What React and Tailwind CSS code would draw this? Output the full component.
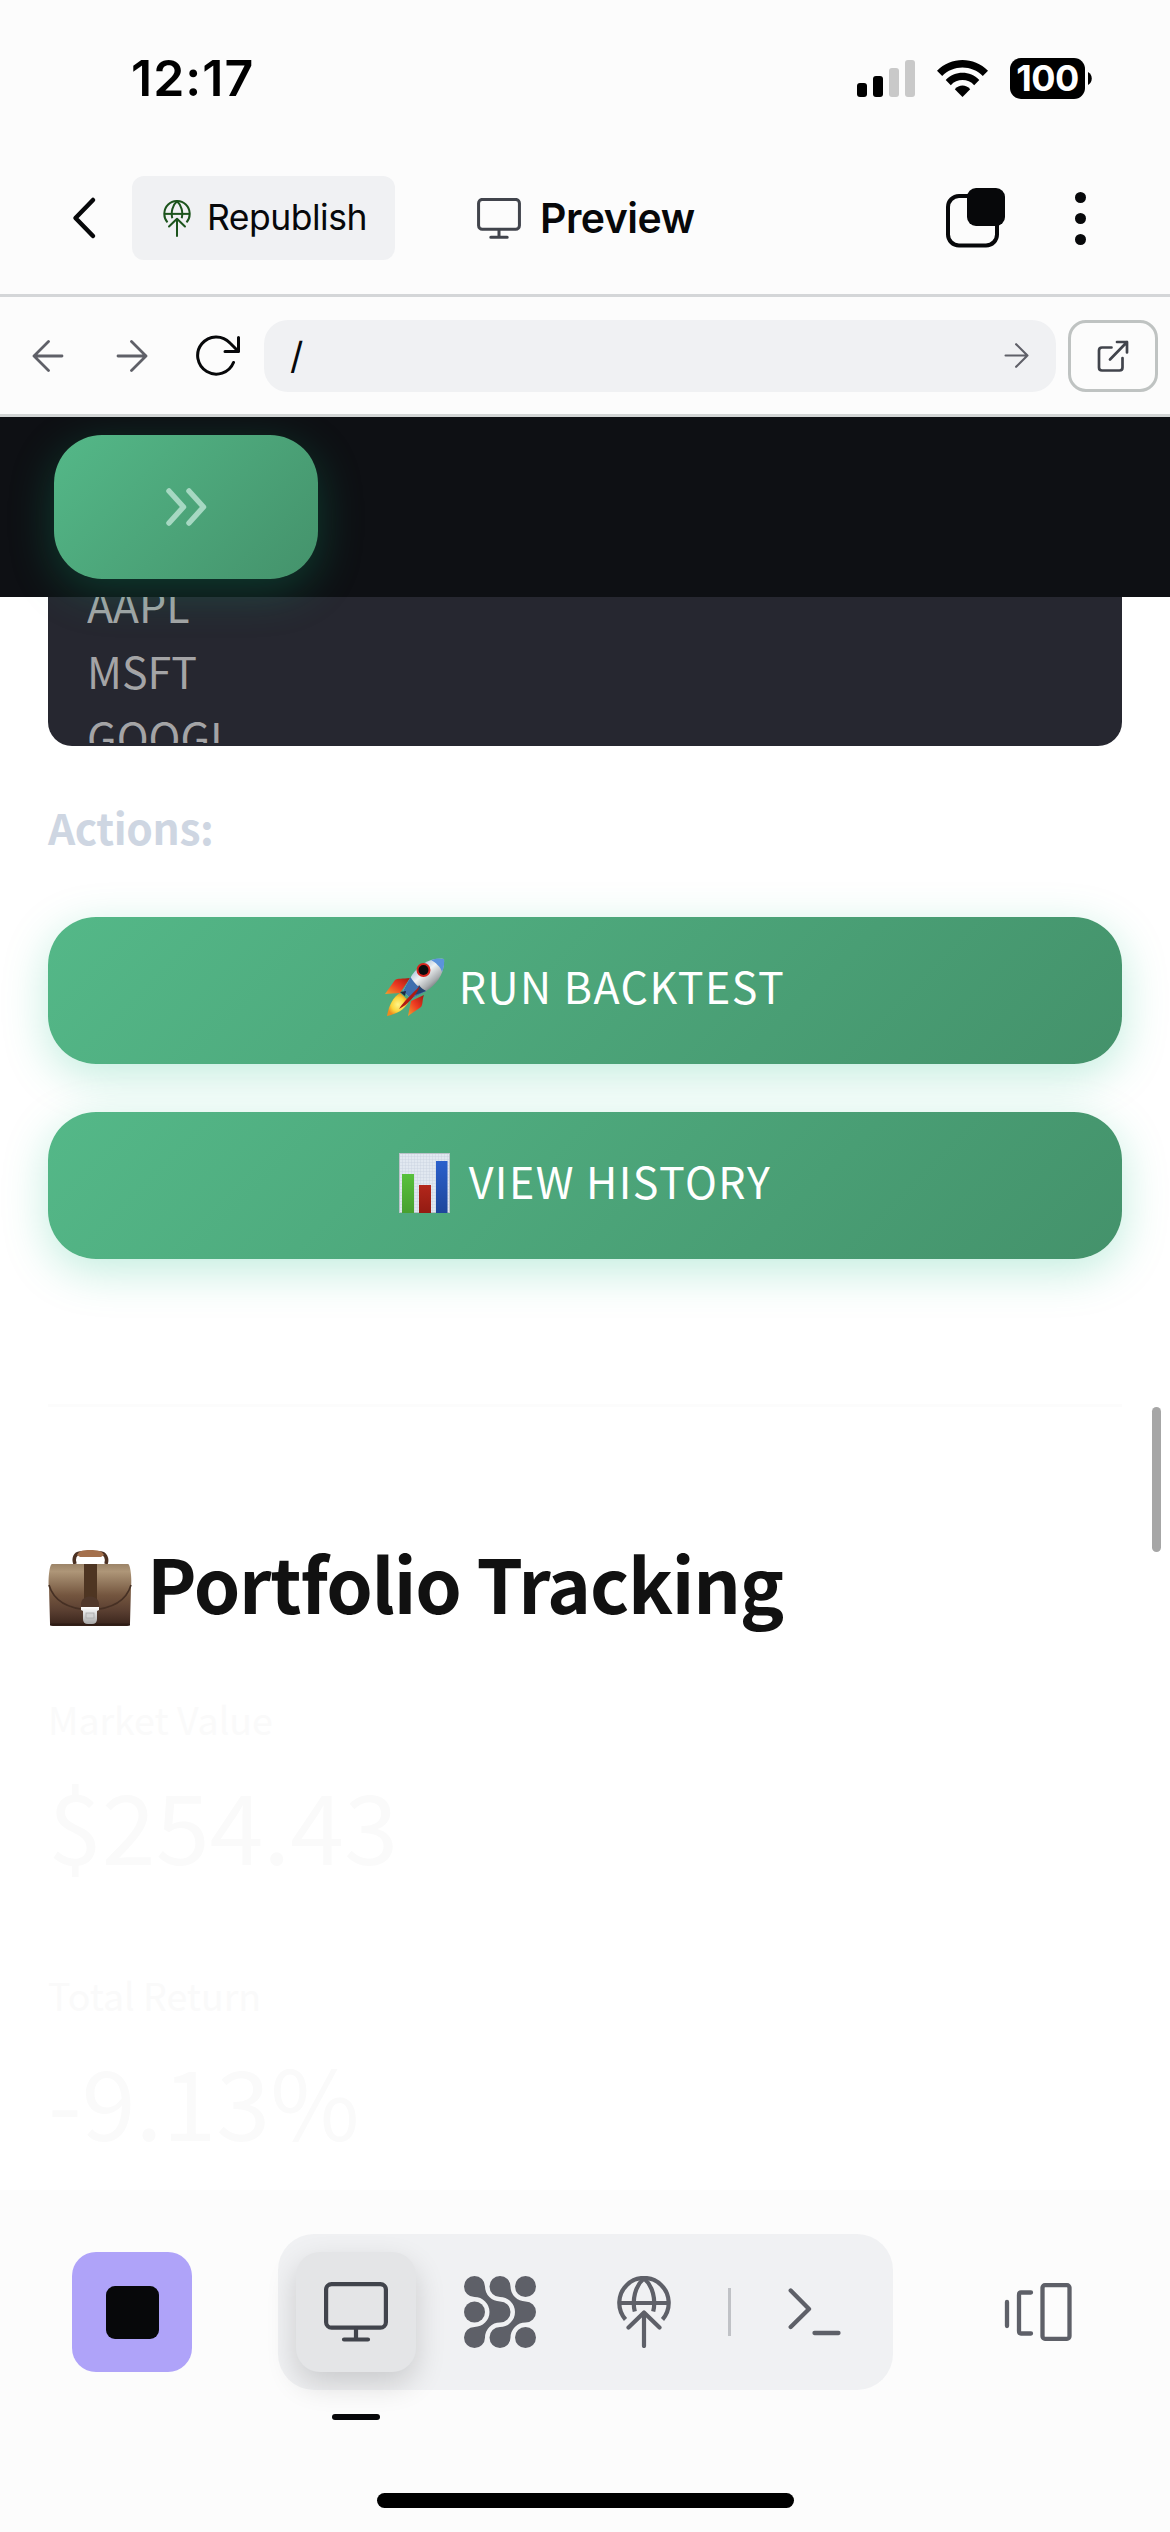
import React from "react";

const SANS = "font-['Noto_Sans_CJK_SC','Open_Sans',sans-serif]";
const UI = "font-['Inter','Roboto',sans-serif]";

function Globe({ className, color, sw = 4.2 }) {
  return (
    <svg className={className} viewBox="0 0 54 72" fill="none" stroke={color} strokeWidth={sw}>
      <path d="M8.5 43.5A24.7 25 0 1 1 45.5 43.5" />
      <path d="M2.5 27H51.5" />
      <path d="M17.8 35.5C15 24 18 10 27 2.5C36 10 39 24 36.2 35.5" />
      <path d="M27 70V38M11.5 51.5L27 36.5L42.5 51.5" strokeLinecap="round" strokeLinejoin="round" />
    </svg>
  );
}

function Monitor({ className, sw = 4.2 }) {
  return (
    <svg className={className} viewBox="0 0 64 60" fill="none" stroke="#41444c" strokeWidth={sw} strokeLinecap="round">
      <rect x="2.1" y="2.1" width="59.8" height="43.6" rx="5.5" />
      <path d="M32 46V57M20 57.5H44" />
    </svg>
  );
}

function Rocket() {
  return (
    <svg className="h-[60px] w-[60px] shrink-0" viewBox="0 0 60 60">
      <defs>
        <linearGradient id="hull" x1="0.2" y1="0.1" x2="0.8" y2="0.8">
          <stop offset="0" stopColor="#7fa3cf" />
          <stop offset="0.45" stopColor="#eef1f2" />
          <stop offset="0.75" stopColor="#a9adb0" />
          <stop offset="1" stopColor="#4e5459" />
        </linearGradient>
        <linearGradient id="fin" x1="1" y1="0" x2="0" y2="1">
          <stop offset="0" stopColor="#a3180f" />
          <stop offset="0.5" stopColor="#ee3a22" />
          <stop offset="1" stopColor="#f2a02c" />
        </linearGradient>
        <radialGradient id="flame">
          <stop offset="0" stopColor="#fff58a" />
          <stop offset="0.6" stopColor="#fbd63d" />
          <stop offset="1" stopColor="#ef8a1e" />
        </radialGradient>
      </defs>
      <path d="M25 20C18 21 12 20 10 22L0 36L15 35Z" fill="url(#fin)" />
      <path d="M39 37C37 42 38 47 36 49L23 58L26 43Z" fill="url(#fin)" />
      <path d="M15 35C8 39 4 47 2 58C11 56 20 52 24 43Z" fill="url(#flame)" />
      <path d="M59 1C45 -1 34 7 27 17L18 33L26 41L41 33C51 27 60 16 59 1Z" fill="url(#hull)" />
      <path d="M25.500 19L18 33L26 41L41 33C34 30 29 25 25.500 19Z" fill="#3f6fae" />
      <path d="M30 37L41 33C38 31 36 30 34 27Z" fill="#23436f" />
      <path d="M59 1C54 0 50 0.500 46 2C50 4 56 9 57 14C59 10 59.500 5 59 1Z" fill="#5b93dc" />
      <circle cx="38.500" cy="12" r="7" fill="#d5231c" />
      <circle cx="38.500" cy="12" r="5" fill="#0a0a0c" />
      <path d="M35 28C27 36 19 43 14 51C22 47 31 38 35 28Z" fill="#b01a14" />
      <path d="M15 34L21 33L20 38Z" fill="#1c2a45" />
    </svg>
  );
}

function BarChart() {
  return (
    <svg className="mr-[5px] h-[60px] w-[51px] shrink-0" viewBox="0 0 51 60">
      <defs>
        <pattern id="grid" width="3" height="3" patternUnits="userSpaceOnUse">
          <rect width="3" height="3" fill="#e1e8f0" />
          <path d="M0 0H3M0 0V3" stroke="#c4cfdb" strokeWidth="0.7" />
        </pattern>
        <linearGradient id="g1" x2="0" y2="1"><stop stopColor="#58c13c" /><stop offset="1" stopColor="#48a030" /></linearGradient>
        <linearGradient id="g2" x2="0" y2="1"><stop stopColor="#b3271b" /><stop offset="1" stopColor="#931b12" /></linearGradient>
        <linearGradient id="g3" x2="0" y2="1"><stop stopColor="#2b60cc" /><stop offset="1" stopColor="#1e469b" /></linearGradient>
      </defs>
      <rect width="51" height="60" fill="url(#grid)" />
      <rect x="0.5" y="0.5" width="50" height="59" fill="none" stroke="#b9c2c9" />
      <rect x="3" y="21" width="12" height="39" fill="url(#g1)" />
      <rect x="20" y="32" width="12" height="28" fill="url(#g2)" />
      <rect x="37" y="8" width="11.500" height="52" fill="url(#g3)" />
    </svg>
  );
}

function Briefcase() {
  return (
    <svg className="h-[76px] w-[84px] shrink-0" viewBox="0 0 84 76">
      <defs>
        <linearGradient id="case" x2="0" y2="1">
          <stop offset="0" stopColor="#9c8468" />
          <stop offset="0.12" stopColor="#ae9678" />
          <stop offset="0.5" stopColor="#74563f" />
          <stop offset="0.75" stopColor="#5a3f31" />
          <stop offset="1" stopColor="#38231b" />
        </linearGradient>
        <linearGradient id="lock" x2="0" y2="1">
          <stop stopColor="#ffffff" />
          <stop offset="1" stopColor="#a8a8a8" />
        </linearGradient>
      </defs>
      <path d="M27 14C25 8 27 3.500 32 3H53C57 3.500 60 8 58 14" fill="none" stroke="#4b3123" strokeWidth="3.500" />
      <path d="M29 5C31 1 34 0 42 0S54 1 56 5L53 7H32Z" fill="#a4704c" />
      <path d="M4 14H80C83 15 84 32 83 38L82 73Q82 76 79 76H5Q2 76 2 73L1 38C0 32 1 15 4 14Z" fill="url(#case)" />
      <path d="M1 35C6 52 22 59 42 60C62 59 78 52 83 35" fill="none" stroke="#463024" strokeWidth="1.600" />
      <path d="M2 74.500H82" stroke="#2e1c15" strokeWidth="2" />
      <rect x="36" y="14" width="13" height="36" fill="#4e3522" />
      <path d="M33 57V54C33 44 51 44 51 54V57Z" fill="#50382b" />
      <path d="M33 57H51V60L49 61V69Q49 74 44 74H40Q35 74 35 69V61L33 60Z" fill="url(#lock)" />
      <rect x="38" y="63" width="8" height="5" fill="#d2d2d2" stroke="#aaa" strokeWidth="0.800" />
    </svg>
  );
}

function StatusBar() {
  return (
    <div className={`flex h-[156px] items-center justify-between pl-[131px] pr-[78px] ${UI}`}>
      <span className="text-[50px] font-semibold leading-none tracking-[1px] text-black">12:17</span>
      <div className="flex items-center">
        <div className="flex h-[37px] items-end gap-[6px]">
          <i className="h-[14px] w-[10px] rounded-[3px] bg-black" />
          <i className="h-[21px] w-[10px] rounded-[3px] bg-black" />
          <i className="h-[29px] w-[10px] rounded-[3px] bg-[#c9c9c9]" />
          <i className="h-[37px] w-[10px] rounded-[3px] bg-[#c9c9c9]" />
        </div>
        <svg className="ml-[22px] h-[37px] w-[51px]" viewBox="0 0 51 37">
          <path d="M0 10.800C14 -3.600 37 -3.600 51 10.800L45.800 16C35 4.600 16 4.600 5.200 16Z" />
          <path d="M8.700 20C18 10.300 33 10.300 42.300 20L37.200 25.200C31 18.400 20 18.400 13.800 25.200Z" />
          <path d="M17.800 29.200C22 24.300 29 24.300 33.200 29.200L25.500 37Z" />
        </svg>
        <span className="ml-[22px] flex h-[41px] w-[75px] items-center justify-center rounded-[11px] bg-black text-[36px] font-bold leading-none tracking-[-0.500px] text-white">
          100
        </span>
        <svg className="ml-[3px] h-[13px] w-[4px]" viewBox="0 0 4 13"><path d="M0 0C5 2.500 5 10.500 0 13Z" /></svg>
      </div>
    </div>
  );
}

function TitleBar() {
  return (
    <div className={`flex h-[141px] items-start border-b-[3px] border-[#d4d6d8] pl-[71px] pt-[20px] ${UI}`}>
      <div className="flex h-[84px] items-center">
        <svg className="h-[44px] w-[26px]" viewBox="0 0 26 44" fill="none" stroke="#07080a" strokeWidth="4.500" strokeLinecap="round" strokeLinejoin="round">
          <path d="M22 4L4.500 22L22 40" />
        </svg>
        <div className="ml-[35px] flex h-[84px] w-[263px] items-center rounded-[12px] bg-[#f0f1f3] pl-[31px]">
          <Globe className="h-[37px] w-[28px]" color="#1c541c" sw={3.9} />
          <span className="ml-[16px] text-[35.500px] leading-none tracking-[-0.500px] text-[#07080a]">Republish</span>
        </div>
        <Monitor className="ml-[82px] h-[41px] w-[44px]" sw={4.4} />
        <span className="ml-[19px] w-[159px] text-[41px] font-semibold leading-none tracking-[-0.500px] text-[#07080a]">Preview</span>
        <svg className="ml-[247px] h-[60px] w-[60px]" viewBox="0 0 60 60">
          <rect x="2" y="8" width="49" height="49.500" rx="11" fill="none" stroke="#07080a" strokeWidth="4" />
          <rect x="21" y="0" width="38" height="38" rx="9" fill="#07080a" />
        </svg>
        <div className="ml-[69px] flex flex-col gap-[10px]">
          <i className="h-[11px] w-[11px] rounded-full bg-[#07080a]" />
          <i className="h-[11px] w-[11px] rounded-full bg-[#07080a]" />
          <i className="h-[11px] w-[11px] rounded-full bg-[#07080a]" />
        </div>
      </div>
    </div>
  );
}

function Arrow({ className, color = "#5f6068", flip = false }) {
  return (
    <svg className={className} viewBox="0 0 32 32" fill="none" stroke={color} strokeWidth="2.800" strokeLinecap="round" strokeLinejoin="round">
      {flip ? <path d="M30 16H2M16.500 1.500L2 16L16.500 30.500" /> : <path d="M2 16H30M15.500 1.500L30 16L15.500 30.500" />}
    </svg>
  );
}

function AddressBar() {
  return (
    <div className={`flex h-[120px] items-center border-b-[3px] border-[#d2d5d5] pl-[32px] ${UI}`}>
      <Arrow className="h-[32px] w-[32px]" flip />
      <Arrow className="ml-[52px] h-[32px] w-[32px]" />
      <svg className="ml-[47px] h-[46px] w-[46px]" viewBox="0 0 46 46" fill="none" stroke="#07080a" strokeWidth="3" strokeLinecap="round" strokeLinejoin="round">
        <path d="M38.500 29.500A18.600 18.600 0 1 1 35 10L43.500 18.500M43.500 4.500V18.500H30" />
      </svg>
      <div className="ml-[23px] flex h-[72px] w-[792px] items-center justify-between rounded-[24px] bg-[#f0f1f3] pl-[26px] pr-[27px]">
        <span className="text-[37px] leading-none text-[#07080a]">/</span>
        <Arrow className="h-[25px] w-[25px]" />
      </div>
      <div className="ml-[12px] flex h-[72px] w-[90px] items-center justify-center rounded-[18px] border-[3px] border-[#bfc3c2]">
        <svg className="h-[32px] w-[32px]" viewBox="0 0 32 32" fill="none" stroke="#41444c" strokeWidth="2.700" strokeLinecap="round" strokeLinejoin="round">
          <path d="M14.500 7.500H5Q2 7.500 2 10.500V27.500Q2 30.500 5 30.500H22.500Q25.500 30.500 25.500 27.500V18" />
          <path d="M13 19.500L30 2M20 2H30V12.500" />
        </svg>
      </div>
    </div>
  );
}

function ActionButton({ icon, label }) {
  return (
    <button className="flex h-[147px] w-full items-center justify-center rounded-[48px] bg-[linear-gradient(135deg,#54b888_0%,#44926b_100%)] pb-[5px] shadow-[0_12px_45px_rgba(16,185,129,0.26)]">
      {icon}
      <span className="ml-[14px] pb-[6px] text-[43px] leading-[66px] tracking-[1.450px] text-white">{label}</span>
    </button>
  );
}

function Metric({ label, value }) {
  return (
    <div className="flex flex-col text-[#fafafa]">
      <span className="text-[37.500px] leading-[60px]">{label}</span>
      <span className="mb-[3px] mt-[-1px] text-[97px] leading-[150px]">{value}</span>
    </div>
  );
}

function BottomBar() {
  return (
    <div className="h-[342px] bg-[#fcfcfc] pt-[44px]">
      <div className="flex h-[156px] items-center pl-[72px]">
        <div className="flex h-[120px] w-[120px] items-center justify-center rounded-[24px] bg-[#afa3f9]">
          <i className="h-[53px] w-[53px] rounded-[9px] bg-[#07080a]" />
        </div>
        <div className="ml-[86px] flex h-[156px] w-[615px] items-center rounded-[36px] bg-[#f0f1f3] pl-[18px]">
          <div className="relative flex h-[120px] w-[120px] items-center justify-center rounded-[24px] bg-[#e4e5e7] shadow-[0_12px_30px_rgba(0,0,0,0.16)]">
            <Monitor className="h-[60px] w-[64px]" />
            <i className="absolute left-[36px] top-[162px] h-[6px] w-[48px] rounded-[3px] bg-[#07080a]" />
          </div>
          <svg className="ml-[48px] h-[72px] w-[72px]" viewBox="0 0 72 72" fill="#5e6068">
            <path d="M10.500 0A10.500 10.500 0 0 1 21 10.500A15 15 0 0 0 36 25.500A10.500 10.500 0 0 1 36 46.500A15 15 0 0 0 21 61.500A10.500 10.500 0 0 1 10.500 72A10.500 10.500 0 0 1 10.500 51A15 15 0 0 0 10.500 21A10.500 10.500 0 0 1 10.500 0Z" />
            <path transform="translate(25.500 0)" d="M10.500 0A10.500 10.500 0 0 1 21 10.500A15 15 0 0 0 36 25.500A10.500 10.500 0 0 1 36 46.500A15 15 0 0 0 21 61.500A10.500 10.500 0 0 1 10.500 72A10.500 10.500 0 0 1 10.500 51A15 15 0 0 0 10.500 21A10.500 10.500 0 0 1 10.500 0Z" />
            <circle cx="61.500" cy="10.500" r="10.500" />
            <circle cx="10.500" cy="36" r="10.500" />
            <circle cx="61.500" cy="61.500" r="10.500" />
          </svg>
          <Globe className="ml-[81px] h-[72px] w-[54px]" color="#5e6068" />
          <i className="ml-[57px] h-[48px] w-[3px] bg-[#c0c2c6]" />
          <svg className="ml-[57px] h-[48px] w-[54px]" viewBox="0 0 54 48" fill="none" stroke="#5e6068" strokeWidth="4.300" strokeLinecap="round" strokeLinejoin="round">
            <path d="M2.700 2.500L21 21L2.700 39M26.500 45H50.500" />
          </svg>
        </div>
        <svg className="ml-[110px] h-[58px] w-[70px]" viewBox="0 0 70 58" fill="none" stroke="#5e6068" strokeWidth="4.300" strokeLinecap="round">
          <path d="M4 19V43M28 9.500H18Q16 9.500 16 12V48Q16 50.500 18 50.500H28" />
          <rect x="39.500" y="2.200" width="27" height="53.600" rx="2.500" />
        </svg>
      </div>
      <div className="mx-auto mt-[103px] h-[15px] w-[417px] rounded-full bg-black" />
    </div>
  );
}

export default function App() {
  return (
    <div className="flex h-[2532px] w-[1170px] flex-col overflow-hidden bg-[#fcfcfc]">
      <StatusBar />
      <TitleBar />
      <AddressBar />
      <div className={`relative h-[1773px] overflow-hidden bg-white ${SANS}`}>
        <header className="relative z-10 flex h-[180px] items-center bg-[#0e1014] pl-[54px]">
          <div className="flex h-[144px] w-[264px] items-center justify-center rounded-[48px] bg-[linear-gradient(135deg,#54b888_0%,#44926b_100%)] shadow-[0_12px_45px_rgba(16,185,129,0.26)]">
            <svg className="h-[40px] w-[42px]" viewBox="0 0 42 40" fill="none" stroke="#a6d8c2" strokeWidth="5.500" strokeLinecap="round" strokeLinejoin="round">
              <path d="M4 4L18.500 20L4 36M24 4L38.500 20L24 36" />
            </svg>
          </div>
        </header>
        <main className="px-[48px]">
          <div className="h-[149px] rounded-b-[24px] bg-[#262730] pl-[39px] text-[43px] leading-[66px] text-[#a4a4a6]">
            <div className="h-[146px] overflow-hidden">
              <div className="-mt-[26px] flex flex-col">
                <span>AAPL</span>
                <span>MSFT</span>
                <span>GOOGL</span>
              </div>
            </div>
          </div>
          <p className="mt-[48px] text-[42.500px] font-bold leading-[66px] tracking-[-0.400px] text-[#ced6e2]">Actions:</p>
          <div className="mt-[57px] flex flex-col gap-[48px]">
            <ActionButton icon={<Rocket />} label="RUN BACKTEST" />
            <ActionButton icon={<BarChart />} label="VIEW HISTORY" />
          </div>
          <hr className="mt-[145px] h-[3px] border-0 bg-[#fcfcfc]" />
          <div className="mt-[123px] flex h-[116px] items-center">
            <Briefcase />
            <h2 className="ml-[15px] pb-[13px] text-[74.500px] font-bold leading-[100px] tracking-[-1.200px] text-[#111111]">Portfolio Tracking</h2>
          </div>
          <div className="mt-[43px] flex flex-col gap-[64px]">
            <Metric label="Market Value" value="$254.43" />
            <Metric label="Total Return" value="-9.13%" />
          </div>
        </main>
        <i className="absolute right-[9px] top-[990px] h-[145px] w-[9px] rounded-full bg-[#a6a6a6]" />
      </div>
      <BottomBar />
    </div>
  );
}
